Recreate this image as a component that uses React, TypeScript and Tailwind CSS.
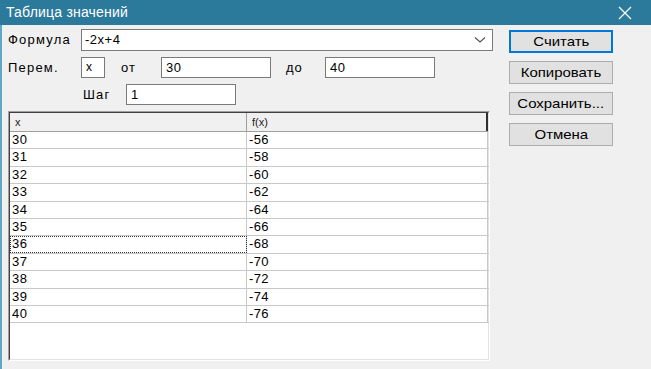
import React from "react";

const rows = [30, 31, 32, 33, 34, 35, 36, 37, 38, 39, 40];

const F = { fontFamily: '"Liberation Sans", Arial, sans-serif' } as const;

function Btn({ label, focus }: { label: string; focus?: boolean }) {
  return (
    <div
      className={
        "h-[23px] w-[104px] flex items-center justify-center text-[13px] text-black bg-[#e1e1e1] " +
        (focus ? "border-2 border-[#0078d7]" : "border border-[#adadad]")
      }
    >
      <span className="inline-block scale-x-[1.15]">{label}</span>
    </div>
  );
}

export default function App() {
  return (
    <div className="w-[651px] h-[369px] bg-[#f0f0f0] flex flex-col overflow-hidden" style={F}>
      <div className="h-[25px] bg-[#2c7a9b] flex items-center justify-between pl-[6px] pr-[18px] shrink-0">
        <span className="text-white text-[14px] tracking-[0.2px]">Таблица значений</span>
        <svg width="16" height="16" viewBox="0 0 16 16">
          <path d="M2 2 L14 14 M14 2 L2 14" stroke="#ffffff" strokeWidth="1.2" fill="none" />
        </svg>
      </div>
      <div className="flex-1 flex border-l-[2px] border-[#5fa7c4]">
        <div className="w-[488px] ml-[6px] flex flex-col">
          <div className="flex items-center h-[22px] mt-[4px]">
            <span className="w-[73px] text-[13px] text-black tracking-[1.2px]">Формула</span>
            <div className="w-[412px] h-[22px] bg-white border border-[#7a7a7a] flex items-center justify-between pl-[3px] pr-[6px]">
              <span className="text-[13px] tracking-[0.5px]">-2x+4</span>
              <svg width="12" height="8" viewBox="0 0 12 8">
                <path d="M1 1.5 L6 6 L11 1.5" stroke="#555" strokeWidth="1.2" fill="none" />
              </svg>
            </div>
          </div>
          <div className="flex items-center h-[21px] mt-[6px]">
            <span className="w-[73px] text-[13px] tracking-[1.2px]">Перем.</span>
            <div className="w-[24px] h-[21px] bg-white border border-[#7a7a7a] text-[12px] pl-[4px] leading-[19px]">x</div>
            <span className="w-[56px] pl-[16px] text-[13px] tracking-[1px]">от</span>
            <div className="w-[110px] h-[21px] bg-white border border-[#7a7a7a] text-[13px] pl-[4px] leading-[19px] tracking-[0.5px]">30</div>
            <span className="w-[54px] pl-[15px] text-[13px] tracking-[1px]">до</span>
            <div className="w-[110px] h-[21px] bg-white border border-[#7a7a7a] text-[13px] pl-[4px] leading-[19px] tracking-[0.5px]">40</div>
          </div>
          <div className="flex items-center h-[21px] mt-[6px]">
            <span className="w-[43px] ml-[75px] text-[13px] tracking-[1.2px]">Шаг</span>
            <div className="w-[110px] h-[21px] bg-white border border-[#7a7a7a] text-[13px] pl-[4px] leading-[19px]">1</div>
          </div>
          <div className="mt-[6px] w-[482px] h-[250px] border-t border-l border-[#a0a0a0] border-r border-b border-r-white border-b-white">
            <div className="h-full border-t border-l border-[#404040] border-r border-b border-r-[#e3e3e3] border-b-[#e3e3e3] bg-white flex flex-col">
              <div className="flex h-[19px] bg-[#f0f0f0] border-b border-[#a0a0a0] text-[11px] text-[#222]">
                <div className="w-[237px] border-r border-[#a0a0a0] pl-[5px] leading-[18px]">x</div>
                <div className="w-[241px] border-r-[2px] border-[#303030] pl-[5px] leading-[18px]">f(x)</div>
              </div>
              {rows.map((r) => (
                <div key={r} className="flex h-[17.4px] border-b border-[#c8c8c8] text-[13px] tracking-[0.4px] w-[479px]">
                  <div
                    className={
                      "w-[237px] border-r border-[#c8c8c8] pl-[2px] leading-[16px] " +
                      (r === 36 ? "outline-1 outline-dotted outline-[#333] -outline-offset-1" : "")
                    }
                  >
                    {r}
                  </div>
                  <div className="w-[241px] pl-[2px] leading-[16px] border-r border-[#c8c8c8]">{4 - 2 * r}</div>
                </div>
              ))}
            </div>
          </div>
        </div>
        <div className="ml-[13px] mt-[5px] flex flex-col gap-[8px]">
          <Btn label="Считать" focus />
          <Btn label="Копировать" />
          <Btn label="Сохранить..." />
          <Btn label="Отмена" />
        </div>
      </div>
    </div>
  );
}
